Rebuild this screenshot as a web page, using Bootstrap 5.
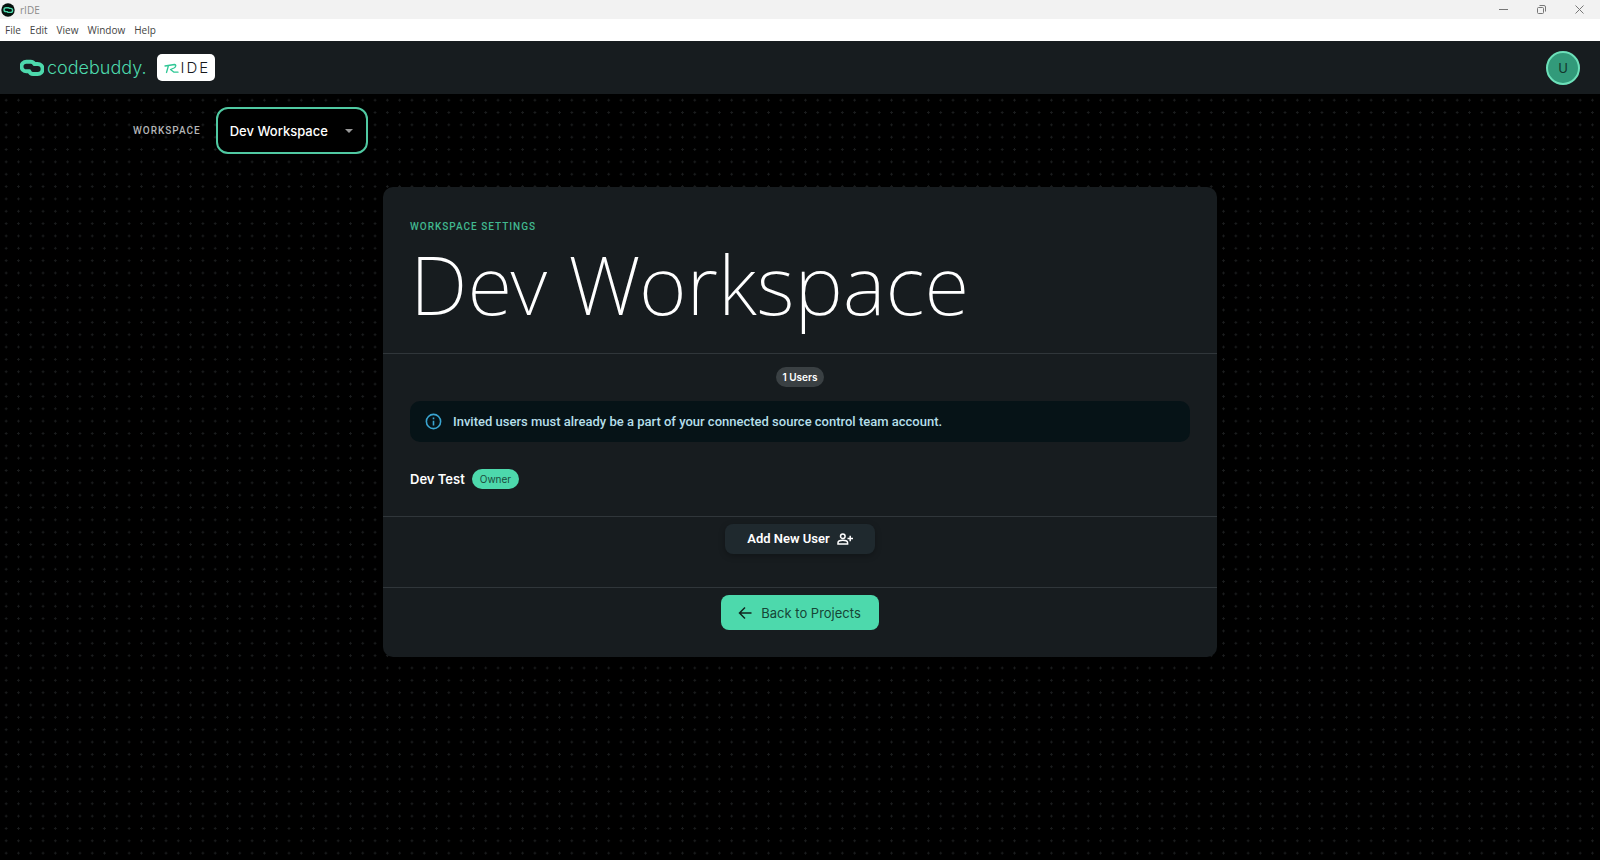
<!DOCTYPE html>
<html lang="en">
<head>
<meta charset="utf-8">
<meta name="viewport" content="width=device-width, initial-scale=1">
<title>rIDE</title>
<link href="https://cdn.jsdelivr.net/npm/bootstrap@5.3.0/dist/css/bootstrap.min.css" rel="stylesheet">
<style>
  :root { --mint: #4dd9ac; --panel: #171c1f; --rule: #30363a; }
  body { font-family: Inter, "Liberation Sans", sans-serif; font-size: 13px; line-height: 20px; background: #000; color: #fff; }
  svg { display: block; flex: none; }

  .titlebar { height: 19px; background: #f2f2f2; color: #8a8a8a; padding: 0 15px 0 1px; font: 10px/18px "Open Sans", sans-serif; }
  .titlebar button { color: #777; }
  .titlebar .app-name { gap: 5px; }
  .window-controls { gap: 27px; }
  .menubar { height: 22px; background: #fff; padding-left: 5px; gap: 9px; font: 10px/22px "Open Sans", sans-serif; }
  .menubar a { color: #444; text-decoration: none; }

  .app-header { height: 53px; background: var(--panel); padding: 0 20px; }
  .brand { color: var(--mint); font-size: 18px; line-height: 24px; font-weight: 300; text-decoration: none; gap: 3px; }
  .ride-logo { height: 27px; padding: 0 5px 0 7px; margin-left: 11px; background: #fff; color: #16191b; border-radius: 5px; font-size: 15px; font-weight: 300; letter-spacing: 2px; }
  .ride-logo svg { margin-right: 1px; }
  .avatar { width: 34px; height: 34px; border: 2px solid #6ce0b9; border-radius: 50%; background: #329a7a; color: #12352b; }

  .dotted { background-image: radial-gradient(circle, #1b1d1e 1px, transparent 1px); background-size: calc(100% / 130) calc(100% / 62); padding: 13px 0 24px; }
  .workspace-bar { width: 84%; padding-left: 5px; gap: 15px; }
  .overline { font-family: Roboto, sans-serif; font-size: 10px; line-height: 16px; font-weight: 500; letter-spacing: 1px; }
  .workspace-bar .overline { color: #b4b6b7; }
  .workspace-select { width: 152px; height: 47px; padding: 0 32px 0 12px; border: 2px solid #50c9a2; border-radius: 12px; font-size: 13px; font-weight: 500; color: #fff;
    background: #000 url("data:image/svg+xml,%3Csvg xmlns='http://www.w3.org/2000/svg' width='8' height='4'%3E%3Cpath d='M0 0h8L4 4z' fill='%23999'/%3E%3C/svg%3E") no-repeat right 13px center; appearance: none; }

  .settings { width: 834px; max-width: 94%; margin-top: 33px; background: var(--panel); border-radius: 10px; }
  .settings section { padding: 0 27px; border-bottom: 1px solid var(--rule); }
  .settings section:last-child { border-bottom: 0; }
  .settings .intro { padding-top: 32px; padding-bottom: 24px; }
  .settings .intro .overline { color: #41b890; }
  .settings h1 { margin: 2px 0 0; font: 200 82px/92px "Noto Sans", sans-serif; }
  .settings .users { padding-top: 13px; padding-bottom: 27px; }
  .settings .add { padding-top: 7px; padding-bottom: 33px; }
  .settings .back { padding-top: 7px; padding-bottom: 27px; }
  .pill { padding: 0 8px; border-radius: 10px; font-size: 10px; line-height: 20px; }
  .count { padding: 0 7px; background: #3a4043; font-weight: 600; }
  .owner { background: var(--mint); color: #1b4c3d; }
  .notice { margin: 14px 0 27px; padding: 0 14px; height: 41px; gap: 10px; background: #061317; color: #b5dfea; border-radius: 10px; font-family: Roboto, sans-serif; font-weight: 500; }
  .member { font-weight: 600; gap: 7px; }
  .add-btn { width: 150px; height: 30px; gap: 7px; background: #1f292e; color: #fff; border: 0; border-radius: 8px; font-family: Roboto, sans-serif; font-weight: 600; box-shadow: 0 2px 6px #0004; }
  .back-btn { height: 35px; padding: 0 18px 0 17px; gap: 9px; background: var(--mint); color: #164536; border: 0; border-radius: 8px; }
</style>
</head>
<body class="d-flex flex-column min-vh-100">

<div class="titlebar d-flex align-items-center justify-content-between">
  <div class="app-name d-flex align-items-center">
    <svg width="14" height="14" viewBox="0 0 14 14"><circle cx="7" cy="7" r="6.7" fill="#06110d"/><path d="M5 4.7h2.3q.8 0 1 .7H9.600a2 2 0 0 1 0 4H7.200q-.9 0-1-.8H5a1.950 1.950 0 0 1 0-3.900z" fill="none" stroke="#4dd9ac" stroke-width="1.400"/></svg>
    <span>rIDE</span>
  </div>
  <div class="window-controls d-flex align-items-center">
    <button class="btn p-0 border-0" aria-label="Minimize"><svg width="11" height="11" viewBox="0 0 11 11"><path d="M1 5.500h9" stroke="currentColor"/></svg></button>
    <button class="btn p-0 border-0" aria-label="Restore"><svg width="11" height="11" viewBox="0 0 11 11" fill="none" stroke="currentColor"><rect x="1.500" y="3.500" width="6" height="6" rx="1"/><path d="M3.500 1.500H8a1.500 1.500 0 0 1 1.500 1.500v4.500"/></svg></button>
    <button class="btn p-0 border-0" aria-label="Close"><svg width="11" height="11" viewBox="0 0 11 11"><path d="M1.500 1.500l8 8M9.500 1.500l-8 8" stroke="currentColor"/></svg></button>
  </div>
</div>

<nav class="menubar d-flex" aria-label="Application menu">
  <a href="#">File</a><a href="#">Edit</a><a href="#">View</a><a href="#">Window</a><a href="#">Help</a>
</nav>

<header class="app-header d-flex align-items-center">
  <a class="brand d-flex align-items-center" href="#">
    <svg width="24" height="18" viewBox="0 0 72 54"><path d="M19 8H32Q40 8 43 15H53A13.500 13.500 0 0 1 53 45H39Q31 45 28 37H19A14.500 14.500 0 0 1 19 8Z" fill="none" stroke="currentColor" stroke-width="12" stroke-linejoin="round"/></svg>
    <span>codebuddy.</span>
  </a>
  <div class="ride-logo d-flex align-items-center">
    <svg width="15" height="12" viewBox="0 0 15 12" fill="none" stroke="#2fc795" stroke-width="1.300" stroke-linecap="round" stroke-linejoin="round"><path d="M1 4l9.500-1.500c2 .2 1.500 2.500-.5 3.500L6.500 7.500 10 10.200h4M4.500 3.500L2.500 10.500"/></svg>
    <span>IDE</span>
  </div>
  <button class="avatar p-0 ms-auto" aria-label="Account">U</button>
</header>

<main class="dotted flex-grow-1">
  <div class="workspace-bar d-flex align-items-center mx-auto">
    <label class="overline" for="workspace">WORKSPACE</label>
    <select class="workspace-select" id="workspace"><option>Dev Workspace</option></select>
  </div>

  <div class="settings mx-auto">
    <section class="intro">
      <div class="overline">WORKSPACE SETTINGS</div>
      <h1>Dev Workspace</h1>
    </section>
    <section class="users">
      <div class="d-flex justify-content-center"><span class="pill count">1 Users</span></div>
      <div class="notice d-flex align-items-center" role="note">
        <svg width="19" height="19" viewBox="0 0 24 24" fill="#3aa5d1"><path d="M11 7h2v2h-2zm0 4h2v6h-2zm1-9a10 10 0 1 0 0 20 10 10 0 0 0 0-20zm0 18a8 8 0 1 1 0-16 8 8 0 0 1 0 16z"/></svg>
        <span>Invited users must already be a part of your connected source control team account.</span>
      </div>
      <div class="member d-flex align-items-center">Dev Test <span class="pill owner fw-normal">Owner</span></div>
    </section>
    <section class="add d-flex justify-content-center">
      <button class="add-btn d-flex align-items-center justify-content-center p-0">Add New User
        <svg width="16" height="12" viewBox="0 0 16 12" fill="none" stroke="#fff" stroke-width="1.500"><circle cx="5.800" cy="3.200" r="2.300"/><path d="M1 11V9.800C1 8 3.800 7.300 5.800 7.300s4.800.7 4.800 2.500V11zM13.200 2.800v5.400M10.500 5.500H16"/></svg>
      </button>
    </section>
    <section class="back d-flex justify-content-center">
      <button class="back-btn d-flex align-items-center">
        <svg width="14" height="14" viewBox="0 0 14 14" fill="none" stroke="#10261f" stroke-width="1.500"><path d="M13.500 7H1.500M7 1.500L1.500 7 7 12.500"/></svg>
        Back to Projects
      </button>
    </section>
  </div>
</main>

<script src="https://cdn.jsdelivr.net/npm/bootstrap@5.3.0/dist/js/bootstrap.bundle.min.js"></script>
</body>
</html>
